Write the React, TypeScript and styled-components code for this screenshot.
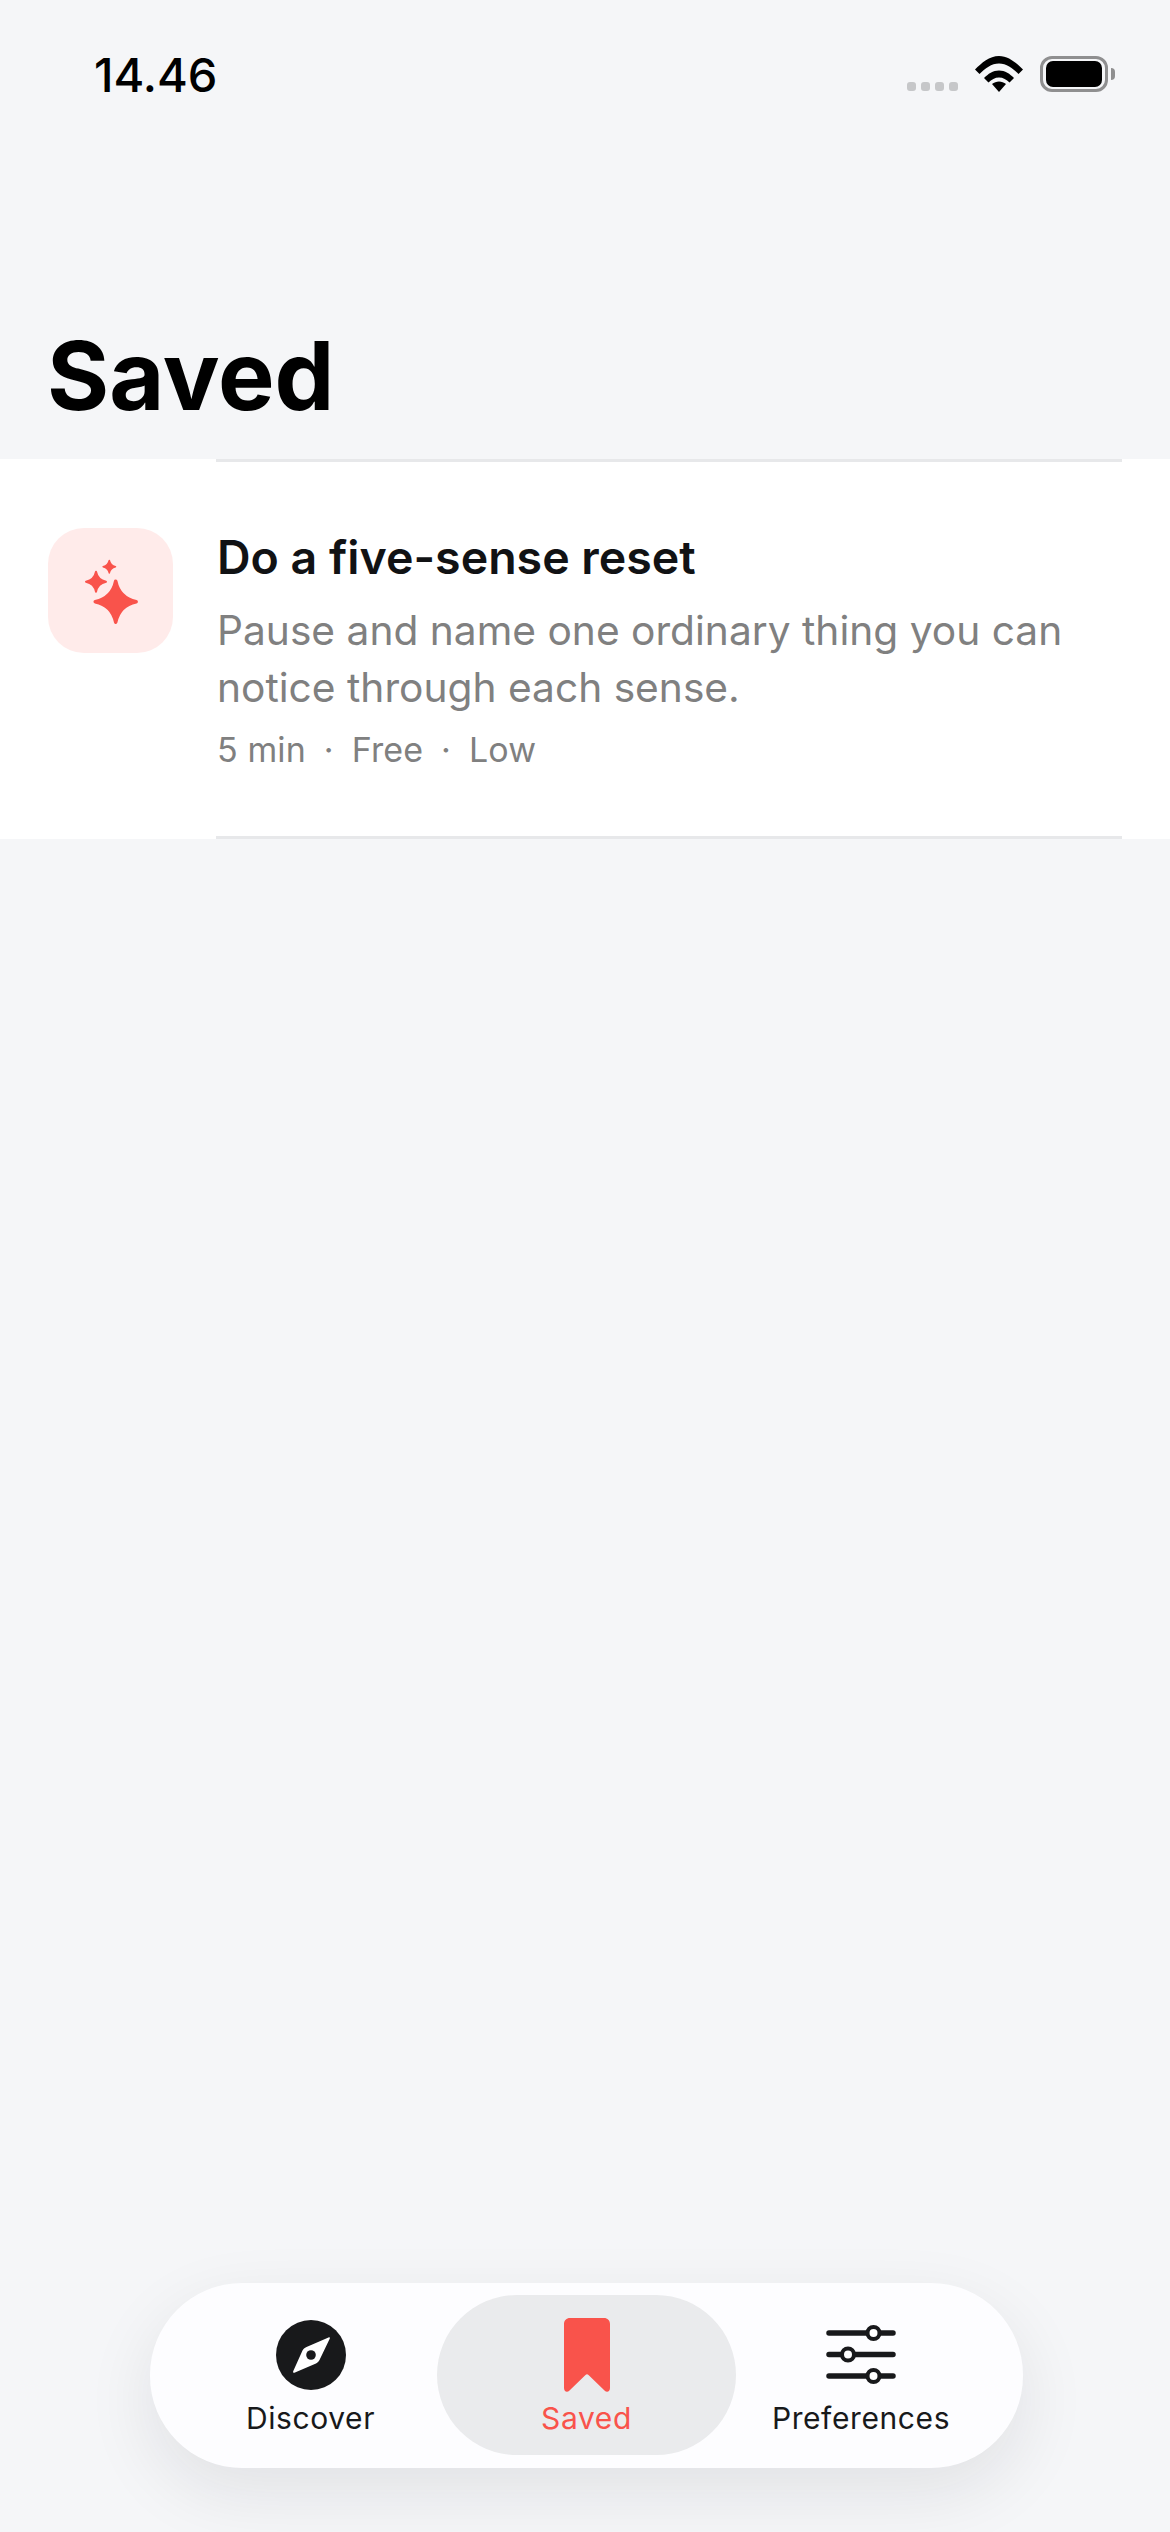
import styled, { createGlobalStyle } from 'styled-components'

const GlobalStyle = createGlobalStyle`
	html, body {
		margin: 0;
		padding: 0;
		background: #f5f6f8;
	}
	* {
		box-sizing: border-box;
	}
`

const RED = '#f9534b'
const INK = '#18191b'

// four-point star, the tips get rounded by the stroke
const starPath = (cx: number, cy: number, r: number) => {
	const k = r * 0.17
	return `M${cx} ${cy - r}Q${cx + k} ${cy - k} ${cx + r} ${cy}Q${cx + k} ${cy + k} ${cx} ${cy + r}Q${cx - k} ${cy + k} ${cx - r} ${cy}Q${cx - k} ${cy - k} ${cx} ${cy - r}Z`
}

const SparkleIcon = () => (
	<svg width='125' height='125' viewBox='0 0 125 125'>
		<g fill={RED} stroke={RED} strokeLinejoin='round'>
			<path d={starPath(67.7, 73.7, 20.5)} strokeWidth='3.5' />
			<path d={starPath(48, 53.7, 10)} strokeWidth='2' />
			<path d={starPath(61.3, 38.7, 6.2)} strokeWidth='1.5' />
		</g>
	</svg>
)

const WifiIcon = () => (
	<svg width='48' height='36' viewBox='0 0 48 36'>
		<path
			d='M0 13.5C6.5 7 14.5 0 24 0s17.5 7 24 13.5L43.5 18C38 12.5 31.5 7.5 24 7.5S10 12.5 4.5 18Z'
			fill='#000'
		/>
		<path
			d='M9 22C13 18 18 14.5 24 14.5S35 18 39 22L34.5 26.5C31.5 23.5 28 21.5 24 21.5S16.5 23.5 13.5 26.5Z'
			fill='#000'
		/>
		<path d='M17 28C19 26.5 21.5 25.5 24 25.5S29 26.5 31 28L24 36Z' fill='#000' />
	</svg>
)

const CompassIcon = () => (
	<svg width='70' height='70' viewBox='0 0 70 70'>
		<circle cx='35' cy='35' r='35' fill={INK} />
		<path
			d='M52.5 17.5L30.5 27C28.5 27.8 27.3 29 26.5 30.5L17.3 51C16.6 52.5 17.5 53.3 19 52.6L40 43.5C41.5 42.8 42.8 41.5 43.5 40L53.7 18.8C54.2 17.7 53.6 17 52.5 17.5Z'
			fill='#fff'
		/>
		<circle cx='35' cy='35' r='4.8' fill={INK} />
	</svg>
)

const BookmarkIcon = () => (
	<svg width='46' height='74' viewBox='0 0 46 74'>
		<path
			d='M6 0H40C43.5 0 46 2.5 46 6V70C46 73.5 43 75 40.5 72.5L24.5 57C23.5 56 22.5 56 21.5 57L5.5 72.5C3 75 0 73.5 0 70V6C0 2.5 2.5 0 6 0Z'
			fill={RED}
		/>
	</svg>
)

const SlidersIcon = () => (
	<svg width='70' height='60' viewBox='0 0 70 60'>
		<g stroke={INK} strokeWidth='5.5' strokeLinecap='round' fill='none'>
			<path d='M3 8H67M3 29.5H67M3 51H67' />
		</g>
		<g stroke={INK} strokeWidth='4' fill='#fff'>
			<circle cx='47.5' cy='8' r='6' />
			<circle cx='22' cy='29.5' r='6' />
			<circle cx='47.5' cy='51' r='6' />
		</g>
	</svg>
)

const App = () => (
	<>
		<GlobalStyle />
		<Screen>
			<StatusBar>
				<Clock>14.46</Clock>
				<StatusIcons>
					<SignalDots>
						<SignalDot />
						<SignalDot />
						<SignalDot />
						<SignalDot />
					</SignalDots>
					<WifiIcon />
					<Battery>
						<BatteryFill />
					</Battery>
				</StatusIcons>
			</StatusBar>
			<PageTitle>Saved</PageTitle>
			<Card>
				<IconTile>
					<SparkleIcon />
				</IconTile>
				<CardBody>
					<CardTitle>Do a five-sense reset</CardTitle>
					<CardText>Pause and name one ordinary thing you can notice through each sense.</CardText>
					<CardMeta>
						<span>5 min</span>
						<MetaDot>·</MetaDot>
						<span>Free</span>
						<MetaDot>·</MetaDot>
						<span>Low</span>
					</CardMeta>
				</CardBody>
			</Card>
			<TabBarWrap>
				<TabBar>
					<Tab width={253}>
						<TabIcon>
							<CompassIcon />
						</TabIcon>
						<TabLabel>Discover</TabLabel>
					</Tab>
					<Tab width={299} active>
						<TabIcon>
							<BookmarkIcon />
						</TabIcon>
						<TabLabel active>Saved</TabLabel>
					</Tab>
					<Tab width={250}>
						<TabIcon>
							<SlidersIcon />
						</TabIcon>
						<TabLabel>Preferences</TabLabel>
					</Tab>
				</TabBar>
			</TabBarWrap>
		</Screen>
	</>
)

export default App

const Screen = styled.div`
	display: flex;
	flex-direction: column;
	width: 1170px;
	height: 2532px;
	overflow: hidden;
	background: #f5f6f8;
	font-family: Inter, 'Liberation Sans', sans-serif;
`

const StatusBar = styled.div`
	display: flex;
	align-items: center;
	justify-content: space-between;
	height: 148px;
	padding: 0 62px 0 94px;
	flex-shrink: 0;
`

const Clock = styled.div`
	font-size: 47px;
	font-weight: 500;
	color: #000;
	line-height: 1;
`

const StatusIcons = styled.div`
	display: flex;
	align-items: center;
	gap: 17px;
`

const SignalDots = styled.div`
	display: flex;
	gap: 5px;
	align-self: flex-end;
	margin-bottom: 1px;
`

const SignalDot = styled.div`
	width: 9px;
	height: 9px;
	border-radius: 3px;
	background: #c6c7c9;
`

const Battery = styled.div`
	position: relative;
	width: 68px;
	height: 36px;
	padding: 2px 3px;
	border: 3px solid #8f8f90;
	border-radius: 12px;

	&::after {
		content: '';
		position: absolute;
		right: -10px;
		top: 9px;
		width: 4px;
		height: 12px;
		border-radius: 0 6px 6px 0;
		background: #8f8f90;
	}
`

const BatteryFill = styled.div`
	width: 100%;
	height: 100%;
	border-radius: 7px;
	background: #000;
`

const PageTitle = styled.h1`
	margin: 0;
	height: 311px;
	padding: 176px 47px 0;
	font-size: 95px;
	line-height: 104px;
	font-weight: 700;
	color: #000;
	flex-shrink: 0;
`

const Card = styled.div`
	position: relative;
	display: flex;
	align-items: flex-start;
	gap: 44px;
	height: 380px;
	padding: 69px 48px 0;
	background: #fff;
	flex-shrink: 0;

	&::before,
	&::after {
		content: '';
		position: absolute;
		left: 216px;
		right: 48px;
		height: 3px;
		background: #e7e8ea;
	}
	&::before {
		top: 0;
	}
	&::after {
		bottom: 0;
	}
`

const IconTile = styled.div`
	width: 125px;
	height: 125px;
	border-radius: 36px;
	background: #ffebea;
	flex-shrink: 0;
	line-height: 0;
`

const CardBody = styled.div`
	display: flex;
	flex-direction: column;
	flex: 1;
`

const CardTitle = styled.div`
	margin-top: -1px;
	font-size: 46.5px;
	line-height: 60px;
	font-weight: 600;
	color: #111214;
`

const CardText = styled.div`
	margin-top: 15px;
	font-size: 40.7px;
	line-height: 57px;
	color: #808080;
`

const CardMeta = styled.div`
	display: flex;
	gap: 18px;
	margin-top: 12px;
	font-size: 34px;
	line-height: 44px;
	font-weight: 400;
	letter-spacing: 0.1px;
	color: #808080;
`

const MetaDot = styled.span`
	color: #808080;
`

const TabBarWrap = styled.div`
	display: flex;
	flex: 1;
	align-items: flex-end;
	padding: 0 147px 64px 150px;
`

const TabBar = styled.div`
	display: flex;
	align-items: stretch;
	width: 873px;
	height: 185px;
	padding: 12px 37px 13px 34px;
	border-radius: 92px;
	background: #fdfdff;
	box-shadow: 0 24px 70px rgba(20, 22, 30, 0.09);
`

const Tab = styled.div<{ width: number; active?: boolean }>`
	display: flex;
	flex-direction: column;
	align-items: center;
	width: ${({ width }) => width}px;
	padding-top: 23px;
	border-radius: 80px;
	background: ${({ active }) => (active ? '#eaebed' : 'transparent')};
`

const TabIcon = styled.div`
	display: flex;
	align-items: center;
	justify-content: center;
	height: 74px;
	line-height: 0;
`

const TabLabel = styled.div<{ active?: boolean }>`
	margin-top: 6px;
	font-size: 30px;
	line-height: 40px;
	font-weight: 420;
	letter-spacing: 0.6px;
	color: ${({ active }) => (active ? RED : INK)};
`
